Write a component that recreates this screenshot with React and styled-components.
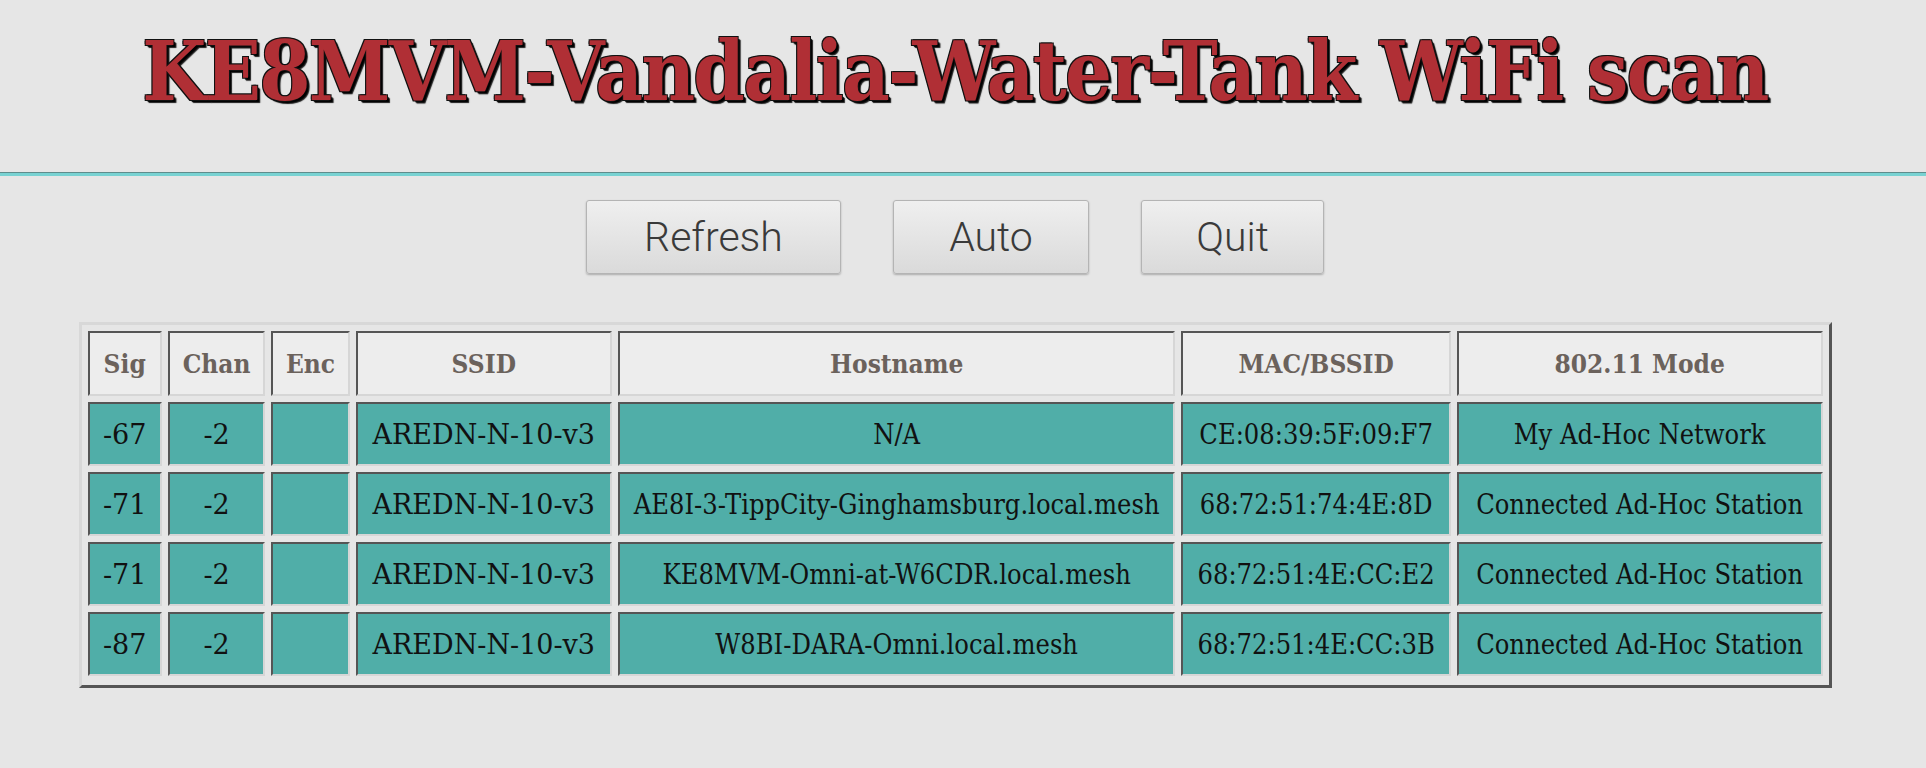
import React from "react";
import styled, { createGlobalStyle } from "styled-components";

const GlobalStyle = createGlobalStyle`
  html, body {
    margin: 0;
    padding: 0;
    background: #e6e6e6;
  }
`;

const Page = styled.div`
  width: 1910px;
  min-height: 768px;
  background: #e6e6e6;
`;

const Title = styled.h1`
  margin: 0;
  padding-top: 30px;
  height: 141px;
  box-sizing: border-box;
  line-height: 82px;
  text-align: center;
  font-family: "DejaVu Serif Condensed", "DejaVu Serif", serif;
  font-stretch: condensed;
  font-weight: 700;
  font-size: 82px;
  letter-spacing: -1.7px;
  color: #b02f35;
  text-shadow: -1px -1px 0 #111, 1px -1px 0 #111, -1px 1px 0 #111,
    2px 2px 1px #000, 3px 3px 1px #222;
`;

const Rule = styled.hr`
  width: 1926px;
  margin: 31px 0 0;
  border: 0;
  height: 1px;
  background: #5e8c8c;
  border-bottom: 3px solid #78d2d2;
`;

const Toolbar = styled.div`
  display: flex;
  justify-content: center;
  gap: 52px;
  margin-top: 24px;
`;

const Button = styled.button`
  width: ${(props) => props.w}px;
  height: 74px;
  border: 1px solid #b4b4b4;
  border-radius: 3px;
  background: linear-gradient(#efefef, #dadada);
  box-shadow: 0 1px 2px rgba(0, 0, 0, 0.25);
  font-family: Roboto, "Open Sans", sans-serif;
  font-weight: 300;
  font-size: 41px;
  color: #3a3a3a;
  padding: 0;
  cursor: pointer;
`;

const TableWrap = styled.div`
  display: flex;
  justify-content: center;
  margin-top: 48px;
`;

const Table = styled.table`
  width: 1753px;
  table-layout: fixed;
  border-collapse: separate;
  border-spacing: 6px;
  border: 3px solid;
  border-color: #d8d8d8 #555 #555 #d8d8d8;
  padding-bottom: 3px;
  background: #e6e6e6;
`;

const Th = styled.th`
  width: ${(props) => props.w}px;
  height: 65px;
  box-sizing: border-box;
  background: #ededed;
  border: 2px solid;
  border-color: #555 #d6d6d6 #d6d6d6 #555;
  padding: 0 4px;
  font-family: "DejaVu Serif Condensed", "DejaVu Serif", serif;
  font-stretch: condensed;
  font-weight: 700;
  font-size: 26px;
  color: #6b625c;
  text-align: center;
  white-space: nowrap;
`;

const Td = styled.td`
  height: 64px;
  box-sizing: border-box;
  background: #50aea8;
  border: 2px solid;
  border-color: #555 #d6d6d6 #d6d6d6 #555;
  padding: 0 2px;
  font-family: ${(props) =>
    props.wide
      ? `"DejaVu Serif", serif`
      : `"DejaVu Serif Condensed", "DejaVu Serif", serif`};
  font-stretch: ${(props) => (props.wide ? "normal" : "condensed")};
  font-size: 27px;
  color: #111;
  text-align: center;
  white-space: nowrap;
`;

const columns = [
  { label: "Sig", w: 74 },
  { label: "Chan", w: 97 },
  { label: "Enc", w: 78 },
  { label: "SSID", w: 255 },
  { label: "Hostname", w: 555 },
  { label: "MAC/BSSID", w: 268 },
  { label: "802.11 Mode", w: 364 },
];

const rows = [
  ["-67", "-2", "", "AREDN-N-10-v3", "N/A", "CE:08:39:5F:09:F7", "My Ad-Hoc Network"],
  ["-71", "-2", "", "AREDN-N-10-v3", "AE8I-3-TippCity-Ginghamsburg.local.mesh", "68:72:51:74:4E:8D", "Connected Ad-Hoc Station"],
  ["-71", "-2", "", "AREDN-N-10-v3", "KE8MVM-Omni-at-W6CDR.local.mesh", "68:72:51:4E:CC:E2", "Connected Ad-Hoc Station"],
  ["-87", "-2", "", "AREDN-N-10-v3", "W8BI-DARA-Omni.local.mesh", "68:72:51:4E:CC:3B", "Connected Ad-Hoc Station"],
];

export default function App() {
  return (
    <Page>
      <GlobalStyle />
      <Title>KE8MVM-Vandalia-Water-Tank WiFi scan</Title>
      <Rule />
      <Toolbar>
        <Button w={255}>Refresh</Button>
        <Button w={196}>Auto</Button>
        <Button w={183}>Quit</Button>
      </Toolbar>
      <TableWrap>
        <Table>
          <thead>
            <tr>
              {columns.map((c) => (
                <Th key={c.label} w={c.w}>
                  {c.label}
                </Th>
              ))}
            </tr>
          </thead>
          <tbody>
            {rows.map((r, i) => (
              <tr key={i}>
                {r.map((v, j) => (
                  <Td key={j} wide={j < 4}>
                    {v}
                  </Td>
                ))}
              </tr>
            ))}
          </tbody>
        </Table>
      </TableWrap>
    </Page>
  );
}
